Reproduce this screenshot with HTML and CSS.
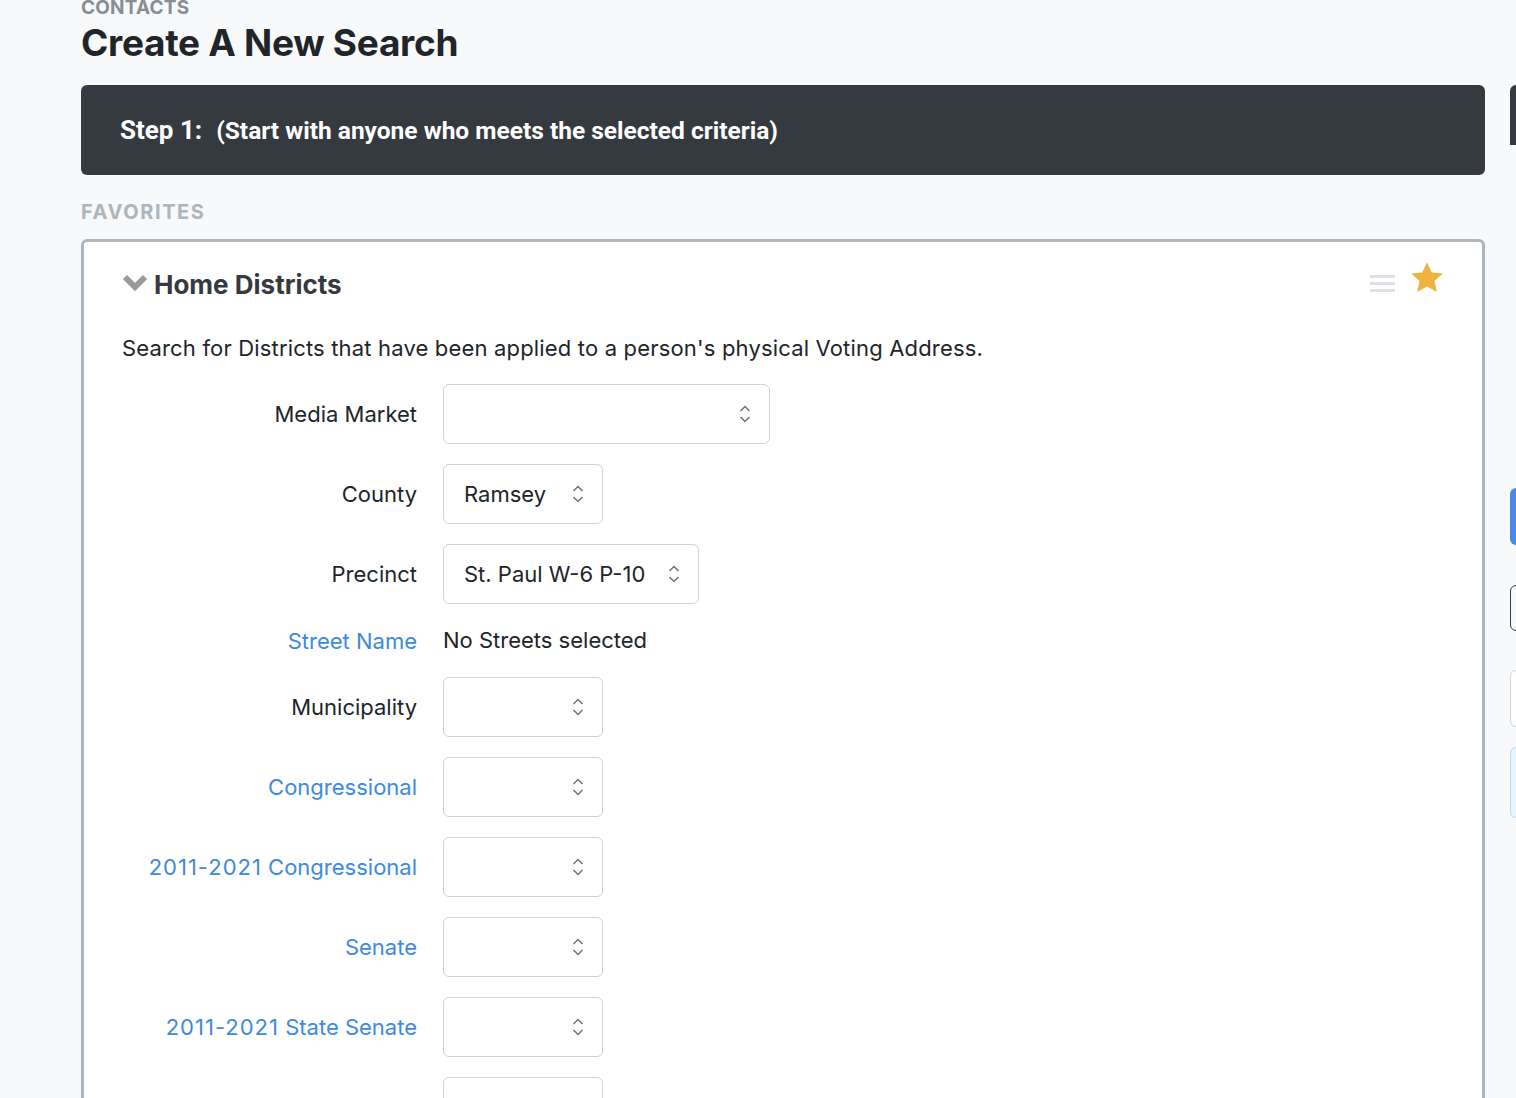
FILE: index.html
```html
<!DOCTYPE html>
<html>
<head>
<meta charset="utf-8">
<link rel="stylesheet" href="styles.css">
</head>
<body>
<div class="page">
  <main class="main">
    <div class="crumb">CONTACTS</div>
    <h1 class="title">Create A New Search</h1>
    <div class="step">
      <span class="step-label">Step 1:</span>
      <span class="step-text">(Start with anyone who meets the selected criteria)</span>
    </div>
    <div class="section-label">FAVORITES</div>
    <section class="card">
      <div class="card-head">
        <div class="card-title">
          <svg class="chev" width="26" height="18" viewBox="0 0 26 18"><polyline points="3,3 13,13 23,3" fill="none" stroke="#9a9a9a" stroke-width="6" stroke-linejoin="miter"/></svg>
          <span>Home Districts</span>
        </div>
        <div class="card-tools">
          <span class="burger"><i></i><i></i><i></i></span>
          <svg class="star" width="34" height="33" viewBox="0 0 24 23"><path d="M12 0.8l3.3 7.1 7.8 0.8-5.8 5.3 1.6 7.7L12 17.8l-6.9 3.9 1.6-7.7L0.9 8.7l7.8-0.8z" fill="#f0b23e"/></svg>
        </div>
      </div>
      <p class="desc">Search for Districts that have been applied to a person's physical Voting Address.</p>
      <div class="form">
        <label class="lbl">Media Market</label>
        <div class="sel w-wide"><span class="val"></span><svg class="arr" width="12" height="20" viewBox="0 0 12 20"><polyline points="1.5,7 6,2.5 10.5,7" fill="none" stroke="#6c757d" stroke-width="1.5"/><polyline points="1.5,13 6,17.5 10.5,13" fill="none" stroke="#6c757d" stroke-width="1.5"/></svg></div>

        <label class="lbl">County</label>
        <div class="sel w-sm"><span class="val">Ramsey</span><svg class="arr" width="12" height="20" viewBox="0 0 12 20"><polyline points="1.5,7 6,2.5 10.5,7" fill="none" stroke="#6c757d" stroke-width="1.5"/><polyline points="1.5,13 6,17.5 10.5,13" fill="none" stroke="#6c757d" stroke-width="1.5"/></svg></div>

        <label class="lbl">Precinct</label>
        <div class="sel w-md"><span class="val">St. Paul W-6 P-10</span><svg class="arr" width="12" height="20" viewBox="0 0 12 20"><polyline points="1.5,7 6,2.5 10.5,7" fill="none" stroke="#6c757d" stroke-width="1.5"/><polyline points="1.5,13 6,17.5 10.5,13" fill="none" stroke="#6c757d" stroke-width="1.5"/></svg></div>

        <label class="lbl link">Street Name</label>
        <div class="plain">No Streets selected</div>

        <label class="lbl">Municipality</label>
        <div class="sel w-sm"><span class="val"></span><svg class="arr" width="12" height="20" viewBox="0 0 12 20"><polyline points="1.5,7 6,2.5 10.5,7" fill="none" stroke="#6c757d" stroke-width="1.5"/><polyline points="1.5,13 6,17.5 10.5,13" fill="none" stroke="#6c757d" stroke-width="1.5"/></svg></div>

        <label class="lbl link">Congressional</label>
        <div class="sel w-sm"><span class="val"></span><svg class="arr" width="12" height="20" viewBox="0 0 12 20"><polyline points="1.5,7 6,2.5 10.5,7" fill="none" stroke="#6c757d" stroke-width="1.5"/><polyline points="1.5,13 6,17.5 10.5,13" fill="none" stroke="#6c757d" stroke-width="1.5"/></svg></div>

        <label class="lbl link"><span class="num">2011-2021</span> Congressional</label>
        <div class="sel w-sm"><span class="val"></span><svg class="arr" width="12" height="20" viewBox="0 0 12 20"><polyline points="1.5,7 6,2.5 10.5,7" fill="none" stroke="#6c757d" stroke-width="1.5"/><polyline points="1.5,13 6,17.5 10.5,13" fill="none" stroke="#6c757d" stroke-width="1.5"/></svg></div>

        <label class="lbl link">Senate</label>
        <div class="sel w-sm"><span class="val"></span><svg class="arr" width="12" height="20" viewBox="0 0 12 20"><polyline points="1.5,7 6,2.5 10.5,7" fill="none" stroke="#6c757d" stroke-width="1.5"/><polyline points="1.5,13 6,17.5 10.5,13" fill="none" stroke="#6c757d" stroke-width="1.5"/></svg></div>

        <label class="lbl link"><span class="num">2011-2021</span> State Senate</label>
        <div class="sel w-sm"><span class="val"></span><svg class="arr" width="12" height="20" viewBox="0 0 12 20"><polyline points="1.5,7 6,2.5 10.5,7" fill="none" stroke="#6c757d" stroke-width="1.5"/><polyline points="1.5,13 6,17.5 10.5,13" fill="none" stroke="#6c757d" stroke-width="1.5"/></svg></div>

        <span class="lbl spacer"></span>
        <div class="sel w-sm"><span class="val"></span><svg class="arr" width="12" height="20" viewBox="0 0 12 20"><polyline points="1.5,7 6,2.5 10.5,7" fill="none" stroke="#6c757d" stroke-width="1.5"/><polyline points="1.5,13 6,17.5 10.5,13" fill="none" stroke="#6c757d" stroke-width="1.5"/></svg></div>
      </div>
    </section>
  </main>
  <aside class="side">
    <div class="side-dark"></div>
    <div class="side-blue"></div>
    <div class="side-outline"></div>
    <div class="side-grey"></div>
    <div class="side-info"></div>
  </aside>
</div>
</body>
</html>
```
FILE: styles.css
```css
html, body {
  margin: 0;
  padding: 0;
  background: #f8f9fa;
  overflow: hidden;
  height: 1098px;
}
body {
  font-family: Inter, "Noto Sans", sans-serif;
  color: #212529;
}
.page {
  display: flex;
  gap: 25px;
  padding-left: 81px;
  width: 1800px;
}
.main {
  width: 1404px;
  flex-shrink: 0;
}
.crumb {
  font-size: 19px;
  font-weight: 700;
  letter-spacing: 0.2px;
  color: #868e96;
  line-height: 20px;
  margin-top: -2px;
}
.title {
  margin: 0;
  font-size: 37px;
  font-weight: 700;
  line-height: 46px;
  color: #212529;
  letter-spacing: -0.3px;
  margin-top: 2px;
}
.step {
  margin-top: 19px;
  height: 90px;
  background: #343a40;
  border-radius: 6px;
  display: flex;
  align-items: center;
  padding-left: 39px;
  color: #fff;
  font-family: Roboto, "Liberation Sans", sans-serif;
  font-weight: 700;
}
.step-label {
  font-size: 26px;
  margin-right: 14px;
}
.step-text {
  font-size: 24.5px;
}
.section-label {
  margin-top: 26px;
  font-size: 20px;
  font-weight: 700;
  letter-spacing: 1.6px;
  color: #adb5bd;
  line-height: 22px;
}
.card {
  margin-top: 16px;
  background: #fff;
  border: 3px solid #adb5bd;
  border-radius: 6px;
  padding: 0 38px 40px 38px;
  height: 1000px;
}
.card-head {
  display: flex;
  justify-content: space-between;
  align-items: center;
  padding-top: 26px;
}
.card-title {
  display: flex;
  align-items: center;
  gap: 6px;
  font-size: 26px;
  font-weight: 700;
  color: #343a40;
  line-height: 34px;
}
.chev {
  display: block;
  margin-top: -4px;
}
.card-tools {
  display: flex;
  align-items: center;
  gap: 15px;
  margin-top: -15px;
}
.burger {
  display: flex;
  flex-direction: column;
  gap: 4px;
  width: 25px;
  margin-top: 11px;
}
.burger i {
  display: block;
  height: 3px;
  background: #dee2e6;
}
.star {
  display: block;
}
.desc {
  margin: 31px 0 0 0;
  font-size: 22px;
  line-height: 30px;
  letter-spacing: 0.17px;
  color: #212529;
}
.form {
  margin-top: 21px;
  display: grid;
  grid-template-columns: 295px auto;
  column-gap: 26px;
  row-gap: 20px;
  justify-items: start;
  align-items: center;
}
.lbl {
  justify-self: end;
  font-size: 22px;
  line-height: 30px;
  color: #212529;
}
.lbl.link {
  color: #3d8ae0;
}
.num {
  letter-spacing: 1px;
}
.plain {
  font-size: 22px;
  line-height: 33px;
  color: #212529;
}
.sel {
  box-sizing: border-box;
  height: 60px;
  border: 1px solid #ced4da;
  border-radius: 6px;
  background: #fff;
  display: flex;
  align-items: center;
  justify-content: space-between;
  padding: 0 18px 0 20px;
  font-size: 22px;
  color: #212529;
}
.w-wide { width: 327px; }
.w-sm { width: 160px; }
.w-md { width: 256px; }
.arr { display: block; }
.side {
  width: 300px;
  flex-shrink: 0;
  padding-top: 85px;
  display: flex;
  flex-direction: column;
}
.side-dark {
  height: 60px;
  background: #343a40;
  border-radius: 6px 6px 0 0;
}
.side-blue {
  margin-top: 343px;
  height: 57px;
  background: #4a8ae0;
  border-radius: 6px;
}
.side-outline {
  margin-top: 40px;
  height: 46px;
  box-sizing: border-box;
  border: 1.5px solid #343a40;
  border-radius: 6px;
}
.side-grey {
  margin-top: 39px;
  height: 57px;
  box-sizing: border-box;
  border: 1px solid #ced4da;
  border-radius: 6px;
  background: #fff;
}
.side-info {
  margin-top: 20px;
  height: 71px;
  box-sizing: border-box;
  border: 1px solid #b8daff;
  border-radius: 6px;
  background: #eaf4ff;
}
```
